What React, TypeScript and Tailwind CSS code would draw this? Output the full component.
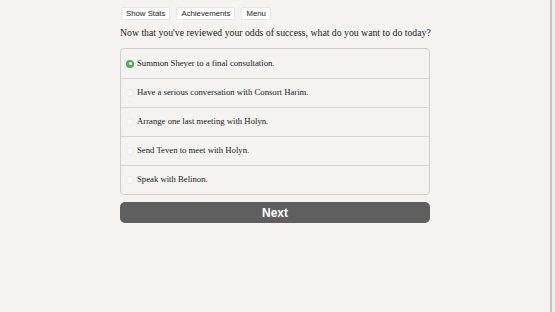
import React from "react";

const options = [
  "Summon Sheyer to a final consultation.",
  "Have a serious conversation with Consort Harim.",
  "Arrange one last meeting with Holyn.",
  "Send Teven to meet with Holyn.",
  "Speak with Belinon.",
];

export default function App() {
  return (
    <div className="flex h-[312px] w-full bg-[#f4f3ef]">
      <div className="flex flex-1 justify-center">
        <div className="w-[310px] pt-[7px]">
          <div className="flex gap-[6px] pl-[1px] font-['Liberation_Sans',sans-serif] text-[7.8px] text-[#222]">
            <button className="h-[13px] rounded-[2px] border border-[#e8e7e3] bg-white px-[4px] leading-[11px]">Show Stats</button>
            <button className="h-[13px] rounded-[2px] border border-[#e8e7e3] bg-white px-[4px] leading-[11px]">Achievements</button>
            <button className="h-[13px] rounded-[2px] border border-[#e8e7e3] bg-white px-[4px] leading-[11px]">Menu</button>
          </div>
          <p className="mt-[7px] whitespace-nowrap font-['Liberation_Serif',serif] text-[9.75px] leading-[12px] text-[#222]">
            Now that you've reviewed your odds of success, what do you want to do today?
          </p>
          <div className="mt-[9px] overflow-hidden rounded-[4px] border border-[#cfcecb] font-['Liberation_Serif',serif] text-[8.7px] text-[#222]">
            {options.map((o, i) => (
              <div
                key={o}
                className={`flex h-[29px] items-center gap-[3px] pl-[5px] ${i > 0 ? "border-t border-[#d6d5d1]" : ""}`}
              >
                {i === 0 ? (
                  <span className="flex h-[8px] w-[8px] shrink-0 items-center justify-center rounded-full bg-[#4caf50]">
                    <span className="h-[3px] w-[3px] rounded-full bg-white" />
                  </span>
                ) : (
                  <span className="h-[8px] w-[8px] shrink-0 rounded-full border border-[#e9e8e4] bg-[#f9f8f5]" />
                )}
                <span className="whitespace-nowrap">{o}</span>
              </div>
            ))}
          </div>
          <button className="mt-[7px] flex h-[21px] w-full items-center justify-center rounded-[5px] bg-[#5f5f5f] font-['Liberation_Sans',sans-serif] text-[12px] font-bold text-white">
            Next
          </button>
        </div>
      </div>
      <div className="flex w-[5px]">
        <div className="w-[2px] bg-[#c4c4c4]" />
        <div className="w-[3px] bg-[#eeeeec]" />
      </div>
    </div>
  );
}
